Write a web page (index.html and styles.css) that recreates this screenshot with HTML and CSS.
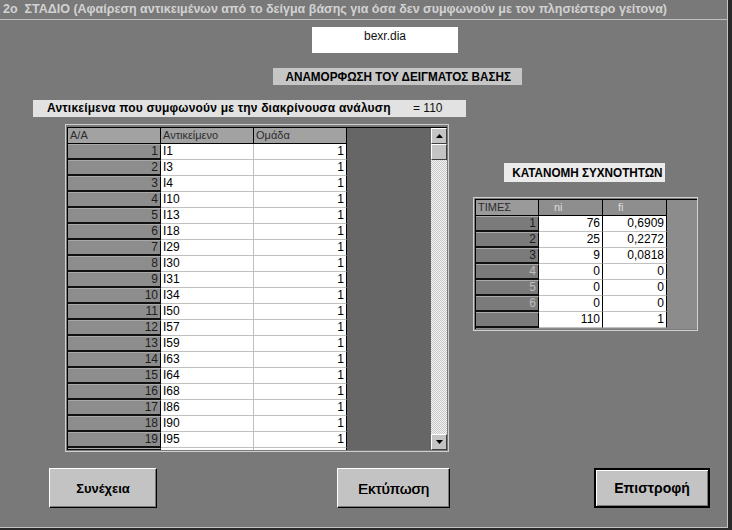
FILE: index.html
```html
<!DOCTYPE html>
<html lang="el">
<head>
    <meta charset="UTF-8">
    <title>2o ΣΤΑΔΙΟ</title>
    <link rel="stylesheet" href="styles.css">
</head>
<body>
    <div class="window">
        <div class="titlebar">2o&nbsp; ΣΤΑΔΙΟ (Αφαίρεση αντικειμένων από το δείγμα βάσης για όσα δεν συμφωνούν με τον πλησιέστερο γείτονα)</div>

        <div class="file-box">bexr.dia</div>

        <div class="heading heading-main"><span class="narrow">ΑΝΑΜΟΡΦΩΣΗ ΤΟΥ ΔΕΙΓΜΑΤΟΣ ΒΑΣΗΣ</span></div>

        <div class="agree-bar">
            <span class="agree-text">Αντικείμενα που συμφωνούν με την διακρίνουσα ανάλυση</span>
            <span class="agree-count">= 110</span>
        </div>

        <div class="main">
            <div class="grid-frame">
                <div class="grid-view">
                    <div class="grid-area">
                        <table class="grid">
                            <tr class="head">
                                <td class="c1">Α/Α</td>
                                <td class="c2">Αντικείμενο</td>
                                <td class="c3">Ομάδα</td>
                            </tr>
                            <tr><td class="rh">1</td><td class="c2">I1</td><td class="c3">1</td></tr>
                            <tr><td class="rh">2</td><td class="c2">I3</td><td class="c3">1</td></tr>
                            <tr><td class="rh">3</td><td class="c2">I4</td><td class="c3">1</td></tr>
                            <tr><td class="rh">4</td><td class="c2">I10</td><td class="c3">1</td></tr>
                            <tr><td class="rh">5</td><td class="c2">I13</td><td class="c3">1</td></tr>
                            <tr><td class="rh">6</td><td class="c2">I18</td><td class="c3">1</td></tr>
                            <tr><td class="rh">7</td><td class="c2">I29</td><td class="c3">1</td></tr>
                            <tr><td class="rh">8</td><td class="c2">I30</td><td class="c3">1</td></tr>
                            <tr><td class="rh">9</td><td class="c2">I31</td><td class="c3">1</td></tr>
                            <tr><td class="rh">10</td><td class="c2">I34</td><td class="c3">1</td></tr>
                            <tr><td class="rh">11</td><td class="c2">I50</td><td class="c3">1</td></tr>
                            <tr><td class="rh">12</td><td class="c2">I57</td><td class="c3">1</td></tr>
                            <tr><td class="rh">13</td><td class="c2">I59</td><td class="c3">1</td></tr>
                            <tr><td class="rh">14</td><td class="c2">I63</td><td class="c3">1</td></tr>
                            <tr><td class="rh">15</td><td class="c2">I64</td><td class="c3">1</td></tr>
                            <tr><td class="rh">16</td><td class="c2">I68</td><td class="c3">1</td></tr>
                            <tr><td class="rh">17</td><td class="c2">I86</td><td class="c3">1</td></tr>
                            <tr><td class="rh">18</td><td class="c2">I90</td><td class="c3">1</td></tr>
                            <tr><td class="rh">19</td><td class="c2">I95</td><td class="c3">1</td></tr>
                            <tr class="cut"><td class="rh"></td><td class="c2"></td><td class="c3"></td></tr>
                        </table>
                    </div>
                    <div class="scrollbar">
                        <div class="sb-btn">
                            <svg width="7" height="4" viewBox="0 0 7 4"><path d="M3.5 0 L7 4 H0 Z" fill="#000"/></svg>
                        </div>
                        <div class="sb-thumb"></div>
                        <div class="sb-track"></div>
                        <div class="sb-btn">
                            <svg width="7" height="4" viewBox="0 0 7 4"><path d="M0 0 H7 L3.5 4 Z" fill="#000"/></svg>
                        </div>
                    </div>
                </div>
            </div>

            <div class="freq">
                <div class="heading heading-freq"><span class="narrow">ΚΑΤΑΝΟΜΗ ΣΥΧΝΟΤΗΤΩΝ</span></div>
                <div class="freq-frame">
                    <div class="freq-view">
                        <table class="ftable">
                            <tr class="head">
                                <td class="f1">ΤΙΜΕΣ</td>
                                <td class="f2 light">ni</td>
                                <td class="f3 light">fi</td>
                            </tr>
                            <tr><td class="rh">1</td><td class="f2">76</td><td class="f3">0,6909</td></tr>
                            <tr><td class="rh">2</td><td class="f2">25</td><td class="f3">0,2272</td></tr>
                            <tr><td class="rh">3</td><td class="f2">9</td><td class="f3">0,0818</td></tr>
                            <tr><td class="rh pale">4</td><td class="f2">0</td><td class="f3">0</td></tr>
                            <tr><td class="rh pale">5</td><td class="f2">0</td><td class="f3">0</td></tr>
                            <tr><td class="rh pale">6</td><td class="f2">0</td><td class="f3">0</td></tr>
                            <tr><td class="rh"></td><td class="f2">110</td><td class="f3">1</td></tr>
                        </table>
                    </div>
                </div>
            </div>
        </div>

        <div class="actions">
            <button class="btn btn-next">Συνέχεια</button>
            <button class="btn btn-print">Εκτύπωση</button>
            <button class="btn btn-back">Επιστροφή</button>
        </div>
    </div>
</body>
</html>
```

FILE: styles.css
```css
body {
    margin: 0;
    background: #2a2a2a;
    font-family: 'Liberation Sans', Arial, sans-serif;
    font-size: 12px;
}

.window {
    width: 727px;
    height: 527px;
    background: #797979;
    border-right: 1px solid #c4c4c4;
    border-bottom: 1px solid #c4c4c4;
    overflow: hidden;
}

.titlebar {
    height: 19px;
    line-height: 19px;
    padding-left: 3px;
    border-bottom: 1px solid #bdbdbd;
    color: #d2d2d2;
    font-weight: bold;
    font-size: 12.5px;
    white-space: nowrap;
}

.file-box {
    width: 146px;
    height: 24px;
    margin: 7px 0 0 312px;
    padding-top: 2px;
    background: #fff;
    text-align: center;
    line-height: 15px;
    color: #111;
}

.heading {
    font-weight: bold;
    text-align: center;
    color: #000;
    white-space: nowrap;
}

.narrow {
    display: inline-block;
    transform: scaleX(0.9);
}

.heading-main {
    width: 249px;
    height: 17px;
    line-height: 17px;
    margin: 15px 0 0 273px;
    background: #c6c6c6;
    font-size: 13px;
}

.agree-bar {
    width: 433px;
    height: 17px;
    line-height: 17px;
    margin: 15px 0 0 33px;
    background: #e2e2e2;
    display: flex;
}

.agree-text {
    padding-left: 14px;
    font-weight: bold;
    width: 366px;
    letter-spacing: 0.2px;
}

.agree-count {
    color: #111;
}

.main {
    display: flex;
    margin-top: 7px;
}

/* data grid */
.grid-frame {
    margin-left: 65px;
    border: 1px solid #cfcfcf;
    padding: 2px 1px 1px 1px;
}

.grid-view {
    display: flex;
    border-top: 1px solid #000;
    border-left: 1px solid #000;
    height: 322px;
}

.grid-area {
    width: 363px;
    background: #666;
    overflow: hidden;
}

.grid, .ftable {
    border-collapse: separate;
    border-spacing: 0;
    table-layout: fixed;
}

.grid td, .ftable td {
    padding: 0 2px;
    line-height: 15px;
    white-space: nowrap;
    overflow: hidden;
}

.grid .c1, .grid .rh {
    width: 88px;
    border-right: 1px solid #000;
}

.grid .c2 {
    width: 88px;
    background: #fff;
    border-right: 1px solid #c0c0c0;
    border-bottom: 1px solid #c0c0c0;
}

.grid .c3 {
    width: 88px;
    background: #fff;
    text-align: right;
    border-right: 1px solid #000;
    border-bottom: 1px solid #c0c0c0;
}

.grid .head td, .ftable .head td {
    background: #a2a2a2;
    color: #2c2c2c;
    font-size: 11px;
    text-align: left;
    border-bottom: 1px solid #000;
    border-right: 1px solid #000;
}

.rh {
    background: #8d8d8d;
    text-align: right;
    color: #1e1e1e;
    border-top: 1px solid #a9a9a9;
    border-bottom: 2px solid #111;
}

.grid td.rh, .ftable td.rh {
    line-height: 13px;
}

/* scrollbar */
.scrollbar {
    width: 16px;
    display: flex;
    flex-direction: column;
}

.sb-btn, .sb-thumb {
    height: 14px;
    width: 14px;
    background: #c4c4c4;
    border-top: 1px solid #fff;
    border-left: 1px solid #fff;
    border-right: 1px solid #404040;
    border-bottom: 1px solid #404040;
    display: flex;
    align-items: center;
    justify-content: center;
}

.sb-track {
    flex: 1;
    background: repeating-conic-gradient(#c8c8c8 0 25%, #f2f2f2 0 50%) 0 0 / 2px 2px;
}

/* frequency table */
.freq {
    margin-left: 24px;
}

.heading-freq {
    width: 161px;
    height: 19px;
    line-height: 19px;
    margin: 39px 0 0 31px;
    background: #ebebeb;
    font-size: 13px;
}

.freq-frame {
    width: 222px;
    margin-top: 15px;
    border: 1px solid #d2d2d2;
    padding: 1px 0 1px 1px;
}

.freq-view {
    height: 129px;
    background: #8c8c8c;
    border-top: 1px solid #000;
    border-left: 1px solid #000;
}

.ftable .f1, .ftable .rh {
    width: 58px;
    border-right: 1px solid #000;
}

.ftable .rh {
    background: #7b7b7b;
}

.ftable .rh.pale {
    color: #bdbdbd;
}

.ftable .f2, .ftable .f3 {
    width: 59px;
    background: #fff;
    text-align: right;
    border-right: 1px solid #000;
    border-bottom: 1px solid #c0c0c0;
}

.ftable .head .f1 {
    background: #9a9a9a;
}

.ftable .head .light {
    background: #8e8e8e;
    color: #dcdcdc;
    text-indent: 13px;
}

/* buttons */
.actions {
    display: flex;
    margin-top: 16px;
}

.btn {
    height: 40px;
    background: #c3c3c3;
    border: 1px solid;
    border-color: #fff #000 #000 #fff;
    box-shadow: inset -1px -1px #7a7a7a;
    font-family: 'Liberation Sans', Arial, sans-serif;
    color: #000;
    padding: 0;
}

.btn-next {
    width: 108px;
    margin-left: 49px;
    font-size: 13px;
    font-weight: bold;
}

.btn-print {
    width: 113px;
    margin-left: 180px;
    font-size: 15px;
    text-shadow: 0.3px 0 0 #000;
}

.btn-back {
    width: 116px;
    margin-left: 144px;
    font-size: 14px;
    font-weight: bold;
    border: 2px solid #000;
    box-shadow: inset 1px 1px #fff, inset -1px -1px #7a7a7a;
}
```
